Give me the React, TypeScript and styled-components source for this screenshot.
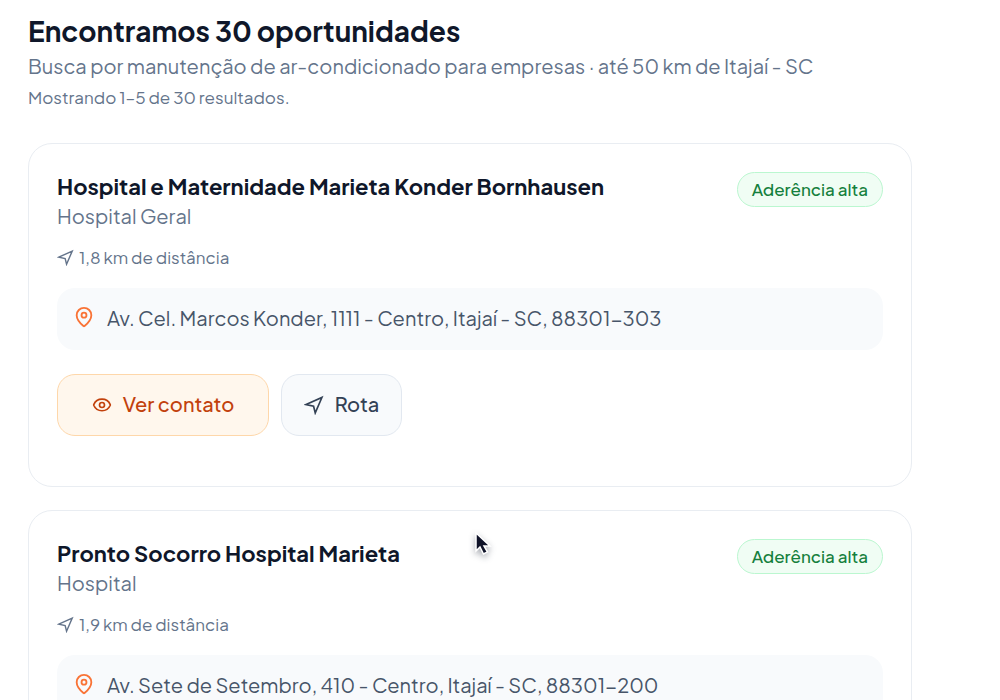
import React from 'react';
import styled, { createGlobalStyle } from 'styled-components';

const GlobalStyle = createGlobalStyle`
  *, *::before, *::after { box-sizing: border-box; }
  body {
    margin: 0;
    background: #fff;
    color: #0f172a;
    font-family: 'Plus Jakarta Sans', Inter, 'Liberation Sans', sans-serif;
    font-weight: 400;
  }
  h1, h2, p { margin: 0; }
`;

const Page = styled.main`
  padding: 13px 88px 28px 28px;
`;

const Heading = styled.h1`
  font-size: 28px;
  font-weight: 700;
  line-height: 36px;
`;

const Text = styled.p<{ $small?: boolean }>`
  color: #64748b;
  font-size: ${(p) => (p.$small ? 17 : 20)}px;
  line-height: ${(p) => (p.$small ? 28 : 30)}px;
`;

const Header = styled.header`
  display: flex;
  flex-direction: column;
  gap: 2px;
  margin-bottom: 32px;
`;

const Results = styled.section`
  display: flex;
  flex-direction: column;
  gap: 23px;
`;

const Card = styled.article`
  padding: 28px 28px 50px;
  border: 1px solid #e9edf2;
  border-radius: 24px;
  background: #fff;
`;

const CardTop = styled.div`
  display: flex;
  justify-content: space-between;
  align-items: flex-start;
  gap: 16px;
`;

const CardTitle = styled.h2`
  font-size: 22px;
  font-weight: 700;
  line-height: 28px;
`;

const Kind = styled.p`
  color: #64748b;
  font-size: 20px;
  line-height: 32px;
`;

const Badge = styled.span`
  flex: none;
  padding: 0 14px 1px;
  border: 1px solid #bbf7d0;
  border-radius: 18px;
  background: #f0fdf4;
  color: #15803d;
  font-size: 17px;
  font-weight: 500;
  line-height: 32px;
`;

const Distance = styled.p`
  display: flex;
  align-items: center;
  gap: 5px;
  margin-top: 12px;
  color: #64748b;
  font-size: 17px;
  line-height: 26px;
`;

const Address = styled.address`
  display: flex;
  align-items: flex-start;
  gap: 12px;
  margin-top: 18px;
  padding: 15px 16px 17px;
  border-radius: 18px;
  background: #f8fafc;
  color: #475569;
  font-size: 20px;
  font-style: normal;
  line-height: 30px;

  svg { margin-top: 3px; }
`;

const Actions = styled.div`
  display: flex;
  gap: 12px;
  margin-top: 24px;
`;

const Action = styled.button<{ $primary?: boolean }>`
  display: inline-flex;
  align-items: center;
  justify-content: center;
  gap: 11px;
  min-width: ${(p) => (p.$primary ? 212 : 121)}px;
  height: 62px;
  padding: 0 20px;
  border: 1px solid ${(p) => (p.$primary ? '#fed7aa' : '#e2e8f0')};
  border-radius: 18px;
  background: ${(p) => (p.$primary ? '#fff7ed' : '#f8fafc')};
  color: ${(p) => (p.$primary ? '#c2410c' : '#334155')};
  font: inherit;
  font-size: 20px;
  font-weight: 500;
  cursor: pointer;
`;

const Label = styled.span`
  padding-bottom: 3px;
`;

const Icon = styled.svg`
  flex: none;
  fill: none;
  stroke: currentColor;
  stroke-width: 2;
`;

const Pointer = styled.svg`
  position: fixed;
  left: 474px;
  top: 531px;
  pointer-events: none;
  filter: drop-shadow(0 3px 3px rgba(15, 23, 42, 0.35));
`;

const NavigationIcon = ({ size }: { size: number }) => (
  <Icon width={size} height={size} viewBox="0 0 24 24" aria-hidden="true">
    <path d="M2.500 11.500 21.500 3 13.500 21.500 11.500 13.500Z" />
  </Icon>
);

const PinIcon = () => (
  <Icon width="22" height="22" viewBox="0 0 24 24" color="#f97336" aria-hidden="true">
    <path d="M20 10c0 5-5.500 10.200-7.400 11.800a1 1 0 0 1-1.200 0C9.500 20.200 4 15 4 10a8 8 0 0 1 16 0Z" />
    <circle cx="12" cy="10" r="2.700" />
  </Icon>
);

const EyeIcon = () => (
  <Icon width="20" height="20" viewBox="0 0 24 24" aria-hidden="true">
    <path d="M2.100 12.300a1 1 0 0 1 0-.7 10.750 10.750 0 0 1 19.800 0 1 1 0 0 1 0 .7 10.750 10.750 0 0 1-19.800 0Z" />
    <circle cx="12" cy="12" r="3" />
  </Icon>
);

const places = [
  {
    name: 'Hospital e Maternidade Marieta Konder Bornhausen',
    kind: 'Hospital Geral',
    distance: '1,8 km de distância',
    address: 'Av. Cel. Marcos Konder, 1111 - Centro, Itajaí - SC, 88301-303',
  },
  {
    name: 'Pronto Socorro Hospital Marieta',
    kind: 'Hospital',
    distance: '1,9 km de distância',
    address: 'Av. Sete de Setembro, 410 - Centro, Itajaí - SC, 88301-200',
  },
];

export default function App() {
  return (
    <>
      <GlobalStyle />
      <Page>
        <Header>
          <Heading>Encontramos 30 oportunidades</Heading>
          <Text>Busca por manutenção de ar-condicionado para empresas · até 50 km de Itajaí - SC</Text>
          <Text $small>Mostrando 1–5 de 30 resultados.</Text>
        </Header>
        <Results>
          {places.map((place) => (
            <Card key={place.name}>
              <CardTop>
                <div>
                  <CardTitle>{place.name}</CardTitle>
                  <Kind>{place.kind}</Kind>
                </div>
                <Badge>Aderência alta</Badge>
              </CardTop>
              <Distance>
                <NavigationIcon size={17} />
                {place.distance}
              </Distance>
              <Address>
                <PinIcon />
                {place.address}
              </Address>
              <Actions>
                <Action type="button" $primary>
                  <EyeIcon />
                  <Label>Ver contato</Label>
                </Action>
                <Action type="button">
                  <NavigationIcon size={20} />
                  <Label>Rota</Label>
                </Action>
              </Actions>
            </Card>
          ))}
        </Results>
      </Page>
      <Pointer width="20" height="27" viewBox="0 0 20 27" aria-hidden="true">
        <path
          d="M2 2v18l4-4 3.500 7 4-2-3.500-6H16Z"
          fill="#0f1228"
          stroke="#fff"
          strokeWidth="1.500"
        />
      </Pointer>
    </>
  );
}
